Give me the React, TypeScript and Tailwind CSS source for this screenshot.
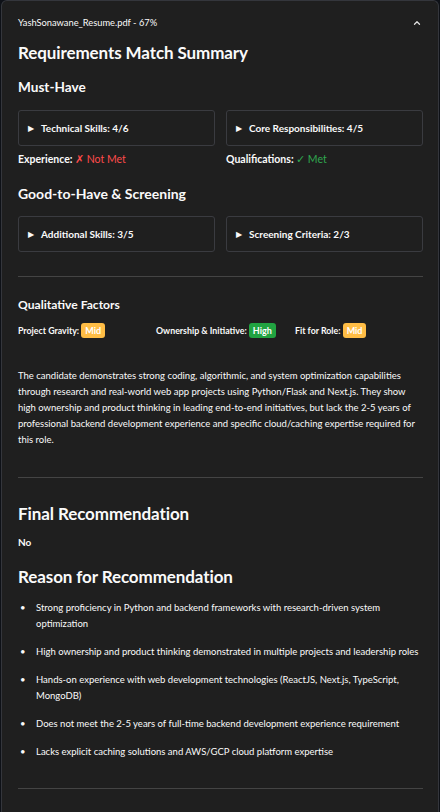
import { ChevronUp } from 'lucide-react';

const reasons = [
  'Strong proficiency in Python and backend frameworks with research-driven system optimization',
  'High ownership and product thinking demonstrated in multiple projects and leadership roles',
  'Hands-on experience with web development technologies (ReactJS, Next.js, TypeScript, MongoDB)',
  'Does not meet the 2-5 years of full-time backend development experience requirement',
  'Lacks explicit caching solutions and AWS/GCP cloud platform expertise',
];

function Collapsed({ label }: { label: string }) {
  return (
    <div className="flex items-center h-[36px] px-[9px] border border-[#3a3b40] rounded-[3px]">
      <span className="text-[8px] text-[#fafafa] mr-[7px]">▶</span>
      <span className="text-[10px] font-bold text-[#fafafa]">{label}</span>
    </div>
  );
}

function Badge({ text, tone }: { text: string; tone: 'mid' | 'high' }) {
  const cls = tone === 'mid' ? 'bg-[#ffbd45] text-white' : 'bg-[#21a341] text-white';
  return <span className={`inline-block rounded-[3px] px-[4px] leading-[15px] text-[9px] font-bold ${cls}`}>{text}</span>;
}

export default function App() {
  return (
    <div className="min-h-[812px] bg-[#0e1117] font-['Lato',sans-serif] text-[#fafafa]">
      <div className="h-[812px] overflow-hidden ml-[1px] mr-[1px] border border-b-0 border-[#34363c] rounded-t-[6px] bg-[#1f1f1f] pl-[16px] pr-[15px]">
        <div className="flex items-center justify-between h-[42px] pt-[1px]">
          <span className="text-[9.3px]">YashSonawane_Resume.pdf - 67%</span>
          <ChevronUp size={10} strokeWidth={3} className="mr-[1px] text-[#e0e0e0]" />
        </div>

        <h1 className="text-[17px] font-bold leading-[22px] tracking-[-0.1px] mt-[-1px]">Requirements Match Summary</h1>

        <h2 className="text-[13.6px] font-bold leading-[18px] mt-[14px]">Must-Have</h2>
        <div className="grid grid-cols-2 gap-x-[11px] mt-[14px]">
          <Collapsed label="Technical Skills: 4/6" />
          <Collapsed label="Core Responsibilities: 4/5" />
          <div className="text-[10.5px] font-bold leading-[14px] mt-[6px]">
            Experience: <span className="font-normal text-[#ff4b4b]">✗ Not Met</span>
          </div>
          <div className="text-[10.5px] font-bold leading-[14px] mt-[6px]">
            Qualifications: <span className="font-normal text-[#2fa84f]">✓ Met</span>
          </div>
        </div>

        <h2 className="text-[14px] font-bold leading-[18px] mt-[19px]">Good-to-Have &amp; Screening</h2>
        <div className="grid grid-cols-2 gap-x-[11px] mt-[13px]">
          <Collapsed label="Additional Skills: 3/5" />
          <Collapsed label="Screening Criteria: 2/3" />
        </div>

        <hr className="border-t border-[#444] mt-[24px]" />

        <h3 className="text-[12.1px] font-bold leading-[16px] mt-[20px]">Qualitative Factors</h3>
        <div className="flex items-center mt-[10px] text-[8.8px] font-bold">
          <span className="w-[138px]">Project Gravity: <Badge text="Mid" tone="mid" /></span>
          <span className="w-[139px]">Ownership &amp; Initiative: <Badge text="High" tone="high" /></span>
          <span>Fit for Role: <Badge text="Mid" tone="mid" /></span>
        </div>

        <p className="text-[9.5px] leading-[16px] mt-[30px]">
          The candidate demonstrates strong coding, algorithmic, and system optimization capabilities through research and real-world web app projects using Python/Flask and Next.js. They show high ownership and product thinking in leading end-to-end initiatives, but lack the 2-5 years of professional backend development experience and specific cloud/caching expertise required for this role.
        </p>

        <hr className="border-t border-[#444] mt-[29px]" />

        <h2 className="text-[17px] font-bold leading-[22px] tracking-[-0.1px] mt-[25px]">Final Recommendation</h2>
        <div className="text-[10px] font-bold mt-[10px]">No</div>

        <h2 className="text-[17px] font-bold leading-[22px] tracking-[-0.1px] mt-[16px]">Reason for Recommendation</h2>
        <ul className="mt-[12px] flex flex-col gap-[12px]">
          {reasons.map((r) => (
            <li key={r} className="flex text-[9.5px] leading-[16px]">
              <span className="w-[18px] shrink-0 pl-[2px]">•</span>
              <span>{r}</span>
            </li>
          ))}
        </ul>

        <hr className="border-t border-[#444] mt-[28px]" />
      </div>
    </div>
  );
}
